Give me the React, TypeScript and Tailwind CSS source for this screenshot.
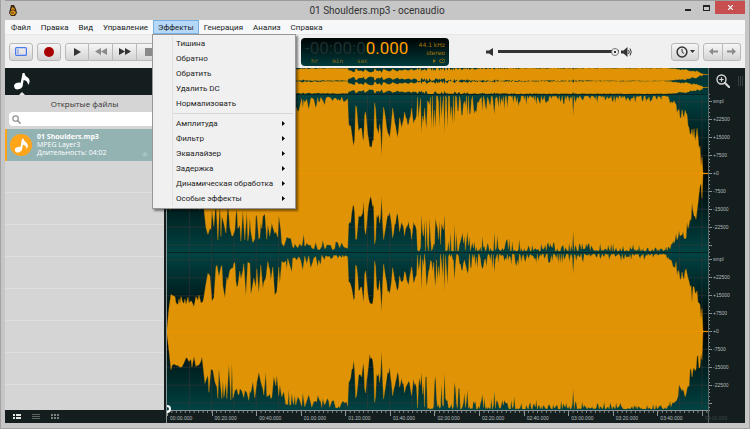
import { useState } from 'react';
import type { ReactNode } from 'react';

const MENUS = ['Файл', 'Правка', 'Вид', 'Управление', 'Эффекты', 'Генерация', 'Анализ', 'Справка'];
const SIMPLE_EFFECTS = ['Тишина', 'Обратно', 'Обратить', 'Удалить DC', 'Нормализовать'];
const EFFECT_GROUPS = ['Амплитуда', 'Фильтр', 'Эквалайзер', 'Задержка', 'Динамическая обработка', 'Особые эффекты'];
const AMP_LABELS = ['smpl', '+22500', '+15000', '+7500', '+0', '-7500', '-15000', '-22500', ''];
const TIMES = [
  '00:00.000', '00:20.000', '00:40.000', '01:00.000', '01:20.000', '01:40.000', '02:00.000',
  '02:20.000', '02:40.000', '03:00.000', '03:20.000', '03:40.000', '04:00.000',
];
const DURATION = 242.7;
const WAVE_W = 542;
const WAVE_H = 158;
const MID = WAVE_H / 2;

// [x, shallowest gap, deepest gap, sparseness of the deep spikes]
const ENVELOPE = [
  [0, 76, 79, 1], [2, 52, 60, 1], [3, 38, 46, 1], [8, 43, 52, 1], [36, 42, 55, 1], [38, 20, 36, 1],
  [48, 12, 54, 1.3], [62, 10, 48, 1.4], [90, 8, 40, 1.4], [104, 8, 42, 1.4], [111, 10, 46, 1], [115, 5, 22, 1.4],
  [140, 3, 19, 1.8], [160, 2, 12, 1.5], [180, 2, 9, 1.5], [182, 0, 0, 1],
  [251, 1, 36, 3], [290, 1, 32, 3], [298, 1, 20, 2.4], [345, 1, 17, 2.8], [360, 1, 11, 2.6],
  [440, 1, 9, 3], [498, 1, 7, 3], [502, 1, 6, 1], [508, 5, 18, 1], [514, 16, 28, 1], [520, 12, 26, 1],
  [526, 28, 50, 1], [531, 32, 60, 1], [534, 42, 68, 1], [536, 50, 79, 1], [537, 78, 79, 1], [542, 79, 79, 1],
];

// the quiet passage between 01:21 and 01:53
const BREAK = [
  [181, 4], [182, 28], [184, 32], [187, 52], [188, 44], [189, 12], [190, 14], [192, 36], [195, 36], [197, 50],
  [198, 22], [199, 18], [201, 40], [203, 55], [205, 54], [207, 46], [208, 8], [209, 14], [210, 36], [212, 38],
  [213, 28], [214, 40], [215, 60], [216, 30], [217, 12], [219, 24], [221, 38], [223, 42], [225, 28], [226, 14],
  [228, 26], [231, 41], [232, 34], [233, 22], [235, 32], [237, 26], [238, 18], [240, 26], [242, 31], [244, 22],
  [245, 14], [247, 30], [249, 26], [250, 22], [251, 2],
];

// lone deep spikes
const SPIKES = [[255, 38], [260, 34], [269, 34], [278, 38], [288, 28], [301, 21], [316, 16], [328, 20], [407, 21]];

function random(seed: number) {
  let s = seed;
  return () => {
    s = (s * 16807) % 2147483647;
    return s / 2147483647;
  };
}

function lerp(points: number[][], x: number, col: number) {
  let i = 0;
  while (i < points.length - 2 && points[i + 1][0] < x) i++;
  const a = points[i];
  const b = points[i + 1];
  const t = Math.min(1, Math.max(0, (x - a[0]) / (b[0] - a[0])));
  return a[col] + (b[col] - a[col]) * t;
}

function gaps(seed: number) {
  const rnd = random(seed);
  const out: number[][] = [];
  let x = 0;
  while (x <= WAVE_W) {
    if (x >= 181 && x <= 251) {
      out.push([x, Math.max(1, lerp(BREAK, x, 1) * (0.9 + rnd() * 0.15))]);
      x += 1;
      continue;
    }
    const lo = lerp(ENVELOPE, x, 1);
    const hi = lerp(ENVELOPE, x, 2);
    const pow = lerp(ENVELOPE, x, 3);
    let gap = lo + (hi - lo) * Math.pow(rnd(), pow);
    const spike = SPIKES.find((p) => Math.abs(p[0] - x) < 0.6);
    if (spike) gap = spike[1];
    out.push([x, gap]);
    x += x < 181 ? 1 + Math.round(rnd()) : 1;
  }
  return out;
}

function wavePath(top: number[][], bottom: number[][]) {
  const upper = top.map(([x, g]) => `${x} ${Math.min(g, MID - 0.4).toFixed(1)}`);
  const lower = [...bottom].reverse().map(([x, g]) => `${x} ${(WAVE_H - Math.min(g, MID - 0.4)).toFixed(1)}`);
  return `M${upper.join('L')}L${lower.join('L')}Z`;
}

const CHANNELS = [wavePath(gaps(4211), gaps(977)), wavePath(gaps(31337), gaps(8642))];

function Channel({ path, overview = false }: { path: string; overview?: boolean }) {
  return (
    <div
      className={
        overview
          ? 'min-h-0 flex-1 bg-[#003838]'
          : 'min-h-0 flex-1 border-t border-[#0a2424] bg-linear-to-b from-[#004343] via-[#000606] to-[#004343]'
      }
    >
      <svg className="block h-full w-full" viewBox={`0 0 ${WAVE_W} ${WAVE_H}`} preserveAspectRatio="none">
        {!overview && (
          <g stroke="#4a3a3a" strokeOpacity="0.45" strokeWidth="1">
            {Array.from({ length: 24 }, (_, i) => (
              <path key={i} d={`M${((i + 1) * 10 * WAVE_W) / DURATION} 0V${WAVE_H}`} />
            ))}
            {[-4, -3, -2, -1, 1, 2, 3, 4].map((n) => (
              <path key={n} d={`M0 ${MID + n * 18}H${WAVE_W}`} />
            ))}
          </g>
        )}
        <path d={path} fill="#e09304" stroke="#e09304" strokeOpacity="0.4" strokeWidth="0.8" strokeLinejoin="bevel" />
        <path d={`M0 ${MID}H${WAVE_W}`} stroke="#ef9200" strokeWidth={overview ? 8 : 1} />
      </svg>
    </div>
  );
}

function NoteIcon({ className }: { className: string }) {
  return (
    <svg className={className} viewBox="0 0 24 24" fill="currentColor">
      <ellipse cx="7" cy="18.6" rx="5.6" ry="4.4" transform="rotate(-18 7 18.6)" />
      <path d="M9.6 18 12.8 1.2h2.6c.2 3.2 2 4.3 4.4 6.2 3 2.6 3.2 6.4.4 10-.3-3.8-2.4-6.2-6-6.6L12.6 19.4z" />
    </svg>
  );
}

function ToolButton({ label, className = 'w-6', children }: { label: string; className?: string; children: ReactNode }) {
  return (
    <button
      aria-label={label}
      className={`flex h-[18px] shrink-0 items-center justify-center border border-[#b9b9b9] bg-linear-to-b from-[#f6f6f6] to-[#d4d4d4] text-[#333] ${className}`}
    >
      {children}
    </button>
  );
}

function TitleBar() {
  return (
    <header className="flex h-5 shrink-0 items-start border-t border-[#9b9b9b]">
      <div className="flex h-full flex-1 items-center pl-1">
        <svg className="h-[11px] w-2" viewBox="0 0 8 11">
          <path d="M2 0h3l1 2 1 2 1 4-2 3H2L0 8l1-4z" fill="#3a2a12" />
          <path d="M3 2l2 1 1 2-2 1-2-1zM2 6h4l1 2-2 2H2L1 8z" fill="#d9901c" />
          <path d="M3 5h2M2 8h3" stroke="#60420f" />
        </svg>
      </div>
      <h1 className="self-center text-[10px] leading-4 text-[#333]">01 Shoulders.mp3 - ocenaudio</h1>
      <div className="flex flex-1 justify-end">
        <button aria-label="Свернуть" className="flex h-[13px] w-[18px] items-end justify-center pb-[3px]">
          <span className="h-0.5 w-1.5 bg-[#222]" />
        </button>
        <button aria-label="Развернуть" className="flex h-[13px] w-[18px] items-center justify-center">
          <span className="h-1.5 w-[7px] border border-t-2 border-[#222]" />
        </button>
        <button aria-label="Закрыть" className="flex h-[13px] w-[30px] items-center justify-center bg-[#c84f4f]">
          <svg className="size-[5px]" viewBox="0 0 5 5" stroke="#fff" strokeWidth="1.2">
            <path d="M0 0l5 5M5 0L0 5" />
          </svg>
        </button>
      </div>
    </header>
  );
}

function EffectsMenu() {
  return (
    <div
      role="menu"
      className="absolute top-full -left-px z-20 w-36 border border-[#979797] bg-[#f0f0f0] pt-px pb-0.5 shadow-[2px_2px_2px_rgba(0,0,0,0.45)]"
    >
      <div className="ml-[19px] border-l border-[#e0e0e0]">
        {SIMPLE_EFFECTS.map((name) => (
          <button key={name} role="menuitem" className="block h-[15px] w-full pl-[3px] text-left text-[8px] leading-[15px]">
            {name}
          </button>
        ))}
        <hr className="my-0.5 mr-0.5 border-[#d9d9d9]" />
        {EFFECT_GROUPS.map((name) => (
          <button
            key={name}
            role="menuitem"
            className="flex h-[15px] w-full items-center justify-between pr-2.5 pl-[3px] text-[8px] leading-[15px]"
          >
            {name}
            <svg className="h-[5px] w-[3px]" viewBox="0 0 3 5">
              <path d="M0 0l3 2.5L0 5z" fill="#000" />
            </svg>
          </button>
        ))}
      </div>
    </div>
  );
}

function MenuBar() {
  const [open, setOpen] = useState('Эффекты');

  return (
    <nav className="flex h-[15px] shrink-0 border-b border-[#e6e8e8] bg-[#f5f7f8] pl-px">
      {MENUS.map((name) => (
        <div key={name} className="relative">
          <button
            onClick={() => setOpen(open === name ? '' : name)}
            className={`block h-[14px] border px-1 pt-px text-[8px] leading-3 ${
              open === name ? 'border-[#78b0e0] bg-[#b6d8f8]' : 'border-transparent'
            }`}
          >
            {name}
          </button>
          {name === 'Эффекты' && open === name && <EffectsMenu />}
        </div>
      ))}
    </nav>
  );
}

function TimeDisplay() {
  return (
    <div className="flex h-7 justify-between rounded bg-linear-to-b from-[#000505] to-[#003c3c] px-1">
      <div>
        <div className="h-[19px] text-[17px] leading-[21px] whitespace-nowrap text-[#ffa000]">
          <span className="text-[#1d3030]">-00:00:0</span>0.000
        </div>
        <div className="flex gap-3.5 pl-1.5 font-['DejaVu_Sans_Mono',monospace] text-[6px] leading-[7px] text-[#8b6d14]">
          <span>hr</span>
          <span>min</span>
          <span>sec</span>
        </div>
      </div>
      <div className="flex flex-col items-end pt-[3px] font-['DejaVu_Sans',sans-serif] text-[6px] leading-[8px] whitespace-nowrap text-[#a87808]">
        <span>44.1 kHz</span>
        <span>stereo</span>
        <svg className="h-2 w-3" viewBox="0 0 12 8" fill="none" stroke="#8b6d14">
          <path d="M0 2l3 2-3 2z" fill="#8b6d14" stroke="none" />
          <path d="M8.5 2.5H8a1.5 1.5 0 000 3h2.5a1.5 1.5 0 000-3M9 1l1.5 1.5L9 4" strokeWidth=".8" />
        </svg>
      </div>
    </div>
  );
}

function Toolbar() {
  return (
    <div className="grid h-[33px] shrink-0 grid-cols-[minmax(0,1fr)_148px_minmax(0,1fr)] items-center bg-[#f0f0f0] px-1">
      <div className="flex">
        <ToolButton label="Боковая панель" className="w-6 rounded-[3px]">
          <svg className="h-[9px] w-3" viewBox="0 0 12 9" fill="none" stroke="#4a78f0">
            <rect x=".6" y=".6" width="10.8" height="7.8" rx="1" strokeWidth="1.2" />
            <path d="M3 2v5" strokeWidth=".8" />
          </svg>
        </ToolButton>
        <ToolButton label="Запись" className="ml-1 w-6 rounded-[3px]">
          <span className="size-2.5 rounded-full bg-[#a80000]" />
        </ToolButton>
        <ToolButton label="Воспроизвести" className="ml-1 w-6 rounded-l-[3px]">
          <svg className="h-2 w-[7px]" viewBox="0 0 7 8" fill="currentColor">
            <path d="M0 0l7 4-7 4z" />
          </svg>
        </ToolButton>
        <ToolButton label="Назад" className="w-6 border-l-0">
          <svg className="h-[7px] w-3" viewBox="0 0 12 7" fill="#8a8a8a">
            <path d="M6 0v7L0 3.5zM12 0v7L6 3.5z" />
          </svg>
        </ToolButton>
        <ToolButton label="Вперёд" className="w-6 border-l-0">
          <svg className="h-[7px] w-3" viewBox="0 0 12 7" fill="currentColor">
            <path d="M0 0l6 3.5L0 7zM6 0l6 3.5L6 7z" />
          </svg>
        </ToolButton>
        <ToolButton label="Стоп" className="w-6 rounded-r-[3px] border-l-0">
          <span className="size-2 bg-[#8a8a8a]" />
        </ToolButton>
      </div>
      <TimeDisplay />
      <div className="flex items-center pl-[37px]">
        <svg className="h-2 w-2 shrink-0 text-[#333]" viewBox="0 0 8 8" fill="currentColor">
          <path d="M0 2.5h3L7 0v8L3 5.5H0z" />
        </svg>
        <input
          type="range"
          aria-label="Громкость"
          defaultValue={100}
          className="mr-0.5 ml-1 h-2 min-w-0 flex-1 appearance-none bg-[linear-gradient(#333,#333)] bg-[length:100%_3px] bg-center bg-no-repeat [&::-webkit-slider-thumb]:size-2 [&::-webkit-slider-thumb]:appearance-none [&::-webkit-slider-thumb]:rounded-full [&::-webkit-slider-thumb]:border [&::-webkit-slider-thumb]:border-[#777] [&::-webkit-slider-thumb]:bg-[radial-gradient(#333_25%,#eee_35%)]"
        />
        <svg className="h-2.5 w-[11px] shrink-0 text-[#333]" viewBox="0 0 11 10" fill="currentColor">
          <path d="M0 3.5h2.5L6.5 0v10L2.5 6.5H0z" />
          <path d="M7.5 3q1.5 2 0 4M9 1.5q2.5 3.5 0 7" fill="none" stroke="currentColor" />
        </svg>
        <ToolButton label="История" className="ml-[39px] w-7 gap-0.5 rounded-[3px]">
          <svg className="size-3" viewBox="0 0 12 12" fill="none" stroke="currentColor">
            <circle cx="6" cy="6" r="4.9" strokeWidth="1.5" />
            <path d="M6 2.8V6l2 1.5" />
          </svg>
          <svg className="h-[3px] w-[5px]" viewBox="0 0 5 3" fill="currentColor">
            <path d="M0 0h5L2.5 3z" />
          </svg>
        </ToolButton>
        <ToolButton label="Отменить" className="ml-1 w-5 rounded-l-[3px]">
          <svg className="h-[7px] w-[9px]" viewBox="0 0 9 7" fill="#8a8a8a">
            <path d="M4 0v2.5h5v2H4V7L0 3.5z" />
          </svg>
        </ToolButton>
        <ToolButton label="Повторить" className="w-[18px] rounded-r-[3px] border-l-0">
          <svg className="h-[7px] w-[9px]" viewBox="0 0 9 7" fill="#8a8a8a">
            <path d="M5 0v2.5H0v2h5V7l4-3.5z" />
          </svg>
        </ToolButton>
      </div>
    </div>
  );
}

function Sidebar() {
  return (
    <aside className="flex w-[159px] shrink-0 flex-col bg-[#d5d5d5] font-['Open_Sans','Noto_Sans',sans-serif]">
      <div className="relative h-[27px] shrink-0 bg-[#141e1f] pt-1 pl-2 text-white">
        <NoteIcon className="size-[18px]" />
        <span className="absolute bottom-0 left-3.5 border-x-[3px] border-b-[3px] border-x-transparent border-b-[#e8e8e8]" />
      </div>
      <h2 className="h-[17px] text-center text-[8px] leading-[17px] text-[#333]">Открытые файлы</h2>
      <label className="mx-1 flex h-[14px] shrink-0 items-center rounded bg-white pl-[3px]">
        <svg className="size-[9px]" viewBox="0 0 9 9" fill="none" stroke="#909090">
          <circle cx="3.6" cy="3.6" r="2.7" strokeWidth="1.2" />
          <path d="M5.6 5.6l3 3" strokeWidth="1.5" />
        </svg>
        <input type="search" aria-label="Поиск" className="min-w-0 flex-1 pl-1 text-[8px] outline-none" />
      </label>
      <ul className="mt-[3px] min-h-0 flex-1 overflow-hidden">
        <li className="flex h-8 items-center border-l-2 border-[#ffa519] bg-[#93b3b3] pl-[3px] text-white">
          <span className="flex size-[22px] items-center justify-center rounded-full bg-[#ffa519]">
            <NoteIcon className="size-[15px]" />
          </span>
          <div className="ml-[5px] text-[7px] leading-[8px]">
            <div className="font-bold">01 Shoulders.mp3</div>
            <div>MPEG Layer3</div>
            <div>Длительность: 04:02</div>
          </div>
          <svg className="mr-4 mb-1 ml-auto size-1.5 self-end" viewBox="0 0 10 10" fill="#a9c4c4">
            <path d="M5 0l1.5 3.5L10 4 7.5 6.3 8 10 5 8 2 10l.5-3.7L0 4l3.5-.5z" />
          </svg>
        </li>
        {Array.from({ length: 8 }, (_, i) => (
          <li key={i} className="h-8 border-b border-[#dedede]" />
        ))}
      </ul>
      <footer className="flex h-[13px] shrink-0 items-center gap-[11px] bg-[#141e1f] pl-2">
        <svg className="h-[5px] w-2" viewBox="0 0 8 5" fill="#e6e6e6">
          <path d="M0 0h2v2H0zM3 0h5v2H3zM0 3h2v2H0zM3 3h5v2H3z" />
        </svg>
        <svg className="h-[5px] w-2" viewBox="0 0 8 5" fill="#5c6464">
          <path d="M0 0h8v1H0zM0 2h8v1H0zM0 4h8v1H0z" />
        </svg>
        <svg className="h-[5px] w-2" viewBox="0 0 8 5" fill="#7a8080">
          <path d="M0 0h2v2H0zM3 0h2v2H3zM6 0h2v2H6zM0 3h2v2H0zM3 3h2v2H3zM6 3h2v2H6z" />
        </svg>
      </footer>
    </aside>
  );
}

function TimeRuler() {
  return (
    <div className="relative flex h-[13px] shrink-0 border-t border-[#8b9494] bg-[#141e1f] font-['Liberation_Sans',sans-serif] text-[5px] leading-[12px]">
      {TIMES.map((time, i) => (
        <div
          key={time}
          className={`w-0 ${i === 12 ? 'text-[#3c4848]' : 'text-[#b4bcbc]'}`}
          style={{ flexGrow: i === 12 ? DURATION - 240 : 20 }}
        >
          <div className="flex">
            <span className="h-[5px] w-px shrink-0 bg-[#8b9494]" />
            <span className="pt-px pl-0.5">{time}</span>
          </div>
        </div>
      ))}
      <svg className="absolute top-0 left-0 h-0.5 w-full" viewBox="0 0 242.7 2" preserveAspectRatio="none">
        <path d="M0 1H242.7" stroke="#8b9494" strokeWidth="2" strokeDasharray=".4 1.6" />
      </svg>
      <span className="absolute -top-1.5 left-0 h-2 w-1 rounded-r-full border-2 border-l-0 border-white" />
    </div>
  );
}

function Editor() {
  return (
    <section className="flex min-w-0 flex-1 border-l border-[#8b9494] bg-[#141e1f]">
      <div className="flex min-w-0 flex-1 flex-col">
        <div className="flex h-[26px] shrink-0 flex-col">
          {CHANNELS.map((path, i) => (
            <Channel key={i} path={path} overview />
          ))}
        </div>
        {CHANNELS.map((path, i) => (
          <Channel key={i} path={path} />
        ))}
        <TimeRuler />
      </div>
      <div className="flex w-[37px] shrink-0 flex-col border-l border-[#5a6868]">
        <div className="flex h-[26px] shrink-0 items-center justify-between pr-0.5 pl-[7px]">
          <button aria-label="Увеличить">
            <svg className="size-[14px]" viewBox="0 0 14 14" fill="none" stroke="#d8d8d8">
              <circle cx="5.5" cy="5.5" r="4.5" strokeWidth="1.4" />
              <path d="M3.3 5.5h4.4M5.5 3.3v4.4" strokeWidth="1.2" />
              <path d="M9 9l4 4" strokeWidth="2.2" strokeLinecap="round" />
            </svg>
          </button>
          <svg className="h-2.5 w-[5px]" viewBox="0 0 5 10" stroke="#364040">
            <path d="M.5 0v10M2.5 0v10M4.5 0v10" />
          </svg>
        </div>
        {CHANNELS.map((_, c) => (
          <div key={c} className="flex min-h-0 flex-1 flex-col justify-center">
            {AMP_LABELS.map((label, i) => (
              <div
                key={i}
                className="flex h-[18px] shrink-0 items-center font-['Liberation_Sans',sans-serif] text-[5px] leading-[6px] text-[#b4bcbc]"
              >
                <svg className="h-[18px] w-1" viewBox="0 0 4 18" stroke="#8b9494">
                  <path d="M0 9.5h3M0 2.5h1M0 6.5h1M0 13.5h1M0 16.5h1" />
                </svg>
                {label}
              </div>
            ))}
          </div>
        ))}
        <div className="h-[13px] shrink-0" />
      </div>
    </section>
  );
}

export default function App() {
  return (
    <div className="flex h-screen flex-col border-x border-b border-[#a2a2a2] bg-[#c6c6c6] px-1 pb-[5px] font-['Roboto','Open_Sans',sans-serif] text-[#1c1c1c]">
      <TitleBar />
      <MenuBar />
      <Toolbar />
      <main className="flex min-h-0 flex-1 overflow-hidden">
        <Sidebar />
        <div className="w-0.5 shrink-0 bg-[#141e1f]" />
        <Editor />
      </main>
    </div>
  );
}
